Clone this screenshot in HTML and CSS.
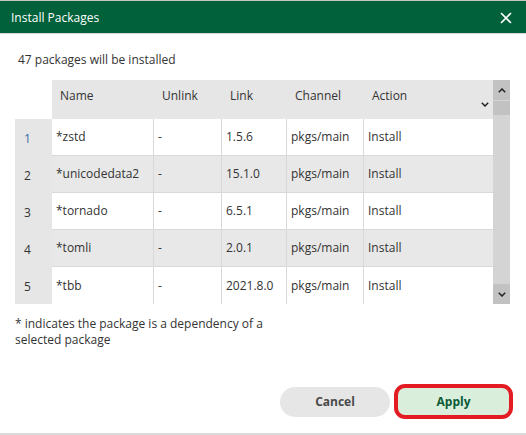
FILE: index.html
```html
<!DOCTYPE html>
<html lang="en">
<head>
<meta charset="utf-8">
<title>Install Packages</title>
<link rel="stylesheet" href="styles.css">
</head>
<body>
<div class="dialog">
  <header class="titlebar">
    <span class="title">Install Packages</span>
    <button class="close" aria-label="Close">
      <svg width="12" height="12" viewBox="0 0 12 12"><path d="M1 1 L11 11 M11 1 L1 11" stroke="#fff" stroke-width="1.7" fill="none"/></svg>
    </button>
  </header>
  <main class="content">
    <p class="summary">47 packages will be installed</p>
    <div class="table-wrap">
      <div class="grid">
        <div class="hcell corner"></div>
        <div class="hcell">Name</div>
        <div class="hcell">Unlink</div>
        <div class="hcell">Link</div>
        <div class="hcell">Channel</div>
        <div class="hcell action"><span>Action</span>
          <svg class="sort" width="8" height="5" viewBox="0 0 8 5"><path d="M0.8 0.8 L4 4 L7.2 0.8" stroke="#222" stroke-width="1.5" fill="none"/></svg>
        </div>

        <div class="row">
          <div class="num sel">1</div><div class="cell sep">*zstd</div><div class="cell sep">-</div><div class="cell sep">1.5.6</div><div class="cell sep">pkgs/main</div><div class="cell">Install</div>
        </div>
        <div class="row alt">
          <div class="num">2</div><div class="cell sep">*unicodedata2</div><div class="cell sep">-</div><div class="cell sep">15.1.0</div><div class="cell sep">pkgs/main</div><div class="cell">Install</div>
        </div>
        <div class="row">
          <div class="num">3</div><div class="cell sep">*tornado</div><div class="cell sep">-</div><div class="cell sep">6.5.1</div><div class="cell sep">pkgs/main</div><div class="cell">Install</div>
        </div>
        <div class="row alt">
          <div class="num">4</div><div class="cell sep">*tomli</div><div class="cell sep">-</div><div class="cell sep">2.0.1</div><div class="cell sep">pkgs/main</div><div class="cell">Install</div>
        </div>
        <div class="row last">
          <div class="num">5</div><div class="cell sep">*tbb</div><div class="cell sep">-</div><div class="cell sep">2021.8.0</div><div class="cell sep">pkgs/main</div><div class="cell">Install</div>
        </div>
      </div>
      <div class="scrollbar">
        <div class="sb-btn">
          <svg width="8" height="5" viewBox="0 0 8 5"><path d="M0.8 4.2 L4 1 L7.2 4.2" stroke="#222" stroke-width="1.5" fill="none"/></svg>
        </div>
        <div class="sb-thumb"></div>
        <div class="sb-track"></div>
        <div class="sb-btn">
          <svg width="8" height="5" viewBox="0 0 8 5"><path d="M0.8 0.8 L4 4 L7.2 0.8" stroke="#222" stroke-width="1.5" fill="none"/></svg>
        </div>
      </div>
    </div>
    <p class="note">* indicates the package is a dependency of a selected package</p>
  </main>
  <footer class="footer">
    <button class="btn cancel">Cancel</button>
    <button class="btn apply">Apply</button>
  </footer>
</div>
</body>
</html>
```
FILE: styles.css
```css
* { box-sizing: border-box; }
html, body { margin: 0; padding: 0; background: #fff; }
body {
  font-family: "Open Sans", "Noto Sans", sans-serif;
  font-size: 12px;
  line-height: 16px;
  color: #333;
}
.dialog {
  width: 526px;
  height: 435px;
  display: flex;
  flex-direction: column;
  border-bottom: 2px solid #d9d9d9;
}
.titlebar {
  height: 34px;
  background: #00613a;
  border-top: 1px solid #c4c4c4;
  border-bottom: 1px solid #d4d4d4;
  display: flex;
  align-items: center;
  justify-content: space-between;
  padding: 1px 14px 0 11px;
}
.title { color: #fff; }
.close {
  background: none;
  border: 0;
  padding: 0;
  width: 12px;
  height: 12px;
  display: flex;
}
.content {
  flex: 1;
  padding: 0 15px;
}
.summary {
  margin: 18px 0 0 3px;
}
.table-wrap {
  margin-top: 12px;
  display: flex;
  height: 224px;
  overflow: hidden;
}
.grid {
  display: grid;
  grid-template-columns: 37px 102px 68px 65px 77px 129px;
  grid-template-rows: 39px repeat(5, 37px);
}
.row { display: contents; }
.hcell {
  background: #e6e6e6;
  padding: 8px 0 0 8px;
}
.hcell.corner { background: #fff; }
.hcell.action {
  display: flex;
  justify-content: space-between;
  padding-right: 4px;
}
.sort { align-self: center; margin-top: 1px; }
.num {
  background: #e6e6e6;
  padding-left: 9px;
  display: flex;
  align-items: center;
  padding-top: 2px;
}
.num.sel { color: #3a6ea8; }
.cell {
  background: #fff;
  border-bottom: 1px solid #d9d9d9;
  padding-left: 4px;
  display: flex;
  align-items: center;
  white-space: nowrap;
}
.cell.sep { border-right: 1px solid #d9d9d9; }
.row.alt .cell { background: #e8e8e8; }
.row.last .cell { border-bottom: 0; }
.scrollbar {
  width: 17px;
  display: flex;
  flex-direction: column;
  background: #d4d4d4;
}
.sb-btn {
  height: 20px;
  background: #c2c2c2;
  display: flex;
  align-items: center;
  justify-content: center;
}
.sb-thumb {
  height: 14px;
  margin-top: 1px;
  background: #c2c2c2;
}
.sb-track { flex: 1; }
.note {
  margin: 12px 0 0;
  width: 262px;
}
.footer {
  display: flex;
  justify-content: flex-end;
  align-items: center;
  gap: 4px;
  padding: 0 13px 14px 0;
}
.btn {
  font-family: "Open Sans", "Noto Sans", sans-serif;
  font-size: 12px;
  font-weight: 700;
  line-height: 16px;
  cursor: pointer;
}
.cancel {
  width: 110px;
  height: 30px;
  border: 0;
  border-radius: 15px;
  background: #e6e6e6;
  color: #4a4a4a;
}
.apply {
  width: 119px;
  height: 35px;
  border: 4px solid #e31b23;
  border-radius: 11px;
  background: #d9eedb;
  color: #0b5a36;
}
```
